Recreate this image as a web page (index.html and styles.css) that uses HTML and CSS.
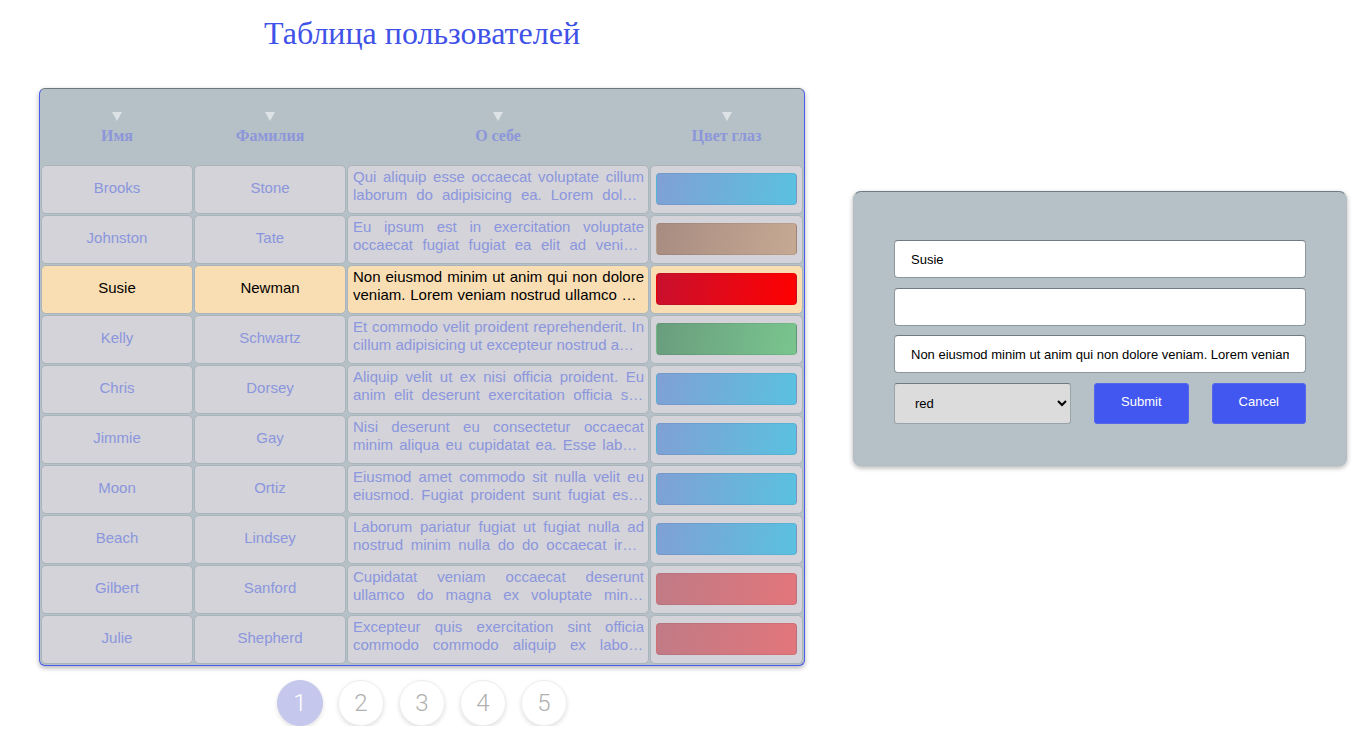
FILE: index.html
```html
<!DOCTYPE html>
<html lang="ru">
<head>
<meta charset="utf-8">
<title>Таблица пользователей</title>
<link rel="stylesheet" href="styles.css">
</head>
<body>
<div class="page">
  <section class="users">
    <h1 class="title">Таблица пользователей</h1>
    <div class="table">
      <div class="row head">
        <div class="th"><span class="arrow"></span>Имя</div>
        <div class="th"><span class="arrow"></span>Фамилия</div>
        <div class="th"><span class="arrow"></span>О себе</div>
        <div class="th"><span class="arrow"></span>Цвет глаз</div>
      </div>
      <div class="row">
        <div class="cell name">Brooks</div>
        <div class="cell name">Stone</div>
        <div class="cell about"><p>Qui aliquip esse occaecat voluptate cillum laborum do adipisicing ea. Lorem dolore ullamco sunt consequat irure aute.</p></div>
        <div class="cell eye"><span class="swatch blue"></span></div>
      </div>
      <div class="row">
        <div class="cell name">Johnston</div>
        <div class="cell name">Tate</div>
        <div class="cell about"><p>Eu ipsum est in exercitation voluptate occaecat fugiat fugiat ea elit ad veniam nulla esse proident anim.</p></div>
        <div class="cell eye"><span class="swatch brown"></span></div>
      </div>
      <div class="row active">
        <div class="cell name">Susie</div>
        <div class="cell name">Newman</div>
        <div class="cell about"><p>Non eiusmod minim ut anim qui non dolore veniam. Lorem veniam nostrud ullamco nisi sunt ad labore.</p></div>
        <div class="cell eye"><span class="swatch red"></span></div>
      </div>
      <div class="row">
        <div class="cell name">Kelly</div>
        <div class="cell name">Schwartz</div>
        <div class="cell about"><p>Et commodo velit proident reprehenderit. In cillum adipisicing ut excepteur nostrud amet tempor.</p></div>
        <div class="cell eye"><span class="swatch green"></span></div>
      </div>
      <div class="row">
        <div class="cell name">Chris</div>
        <div class="cell name">Dorsey</div>
        <div class="cell about"><p>Aliquip velit ut ex nisi officia proident. Eu anim elit deserunt exercitation officia sint pariatur dolor magna.</p></div>
        <div class="cell eye"><span class="swatch blue"></span></div>
      </div>
      <div class="row">
        <div class="cell name">Jimmie</div>
        <div class="cell name">Gay</div>
        <div class="cell about"><p>Nisi deserunt eu consectetur occaecat minim aliqua eu cupidatat ea. Esse labore dolor elit.</p></div>
        <div class="cell eye"><span class="swatch blue"></span></div>
      </div>
      <div class="row">
        <div class="cell name">Moon</div>
        <div class="cell name">Ortiz</div>
        <div class="cell about"><p>Eiusmod amet commodo sit nulla velit eu eiusmod. Fugiat proident sunt fugiat esse culpa.</p></div>
        <div class="cell eye"><span class="swatch blue"></span></div>
      </div>
      <div class="row">
        <div class="cell name">Beach</div>
        <div class="cell name">Lindsey</div>
        <div class="cell about"><p>Laborum pariatur fugiat ut fugiat nulla ad nostrud minim nulla do do occaecat irure aliquip veniam consequat.</p></div>
        <div class="cell eye"><span class="swatch blue"></span></div>
      </div>
      <div class="row">
        <div class="cell name">Gilbert</div>
        <div class="cell name">Sanford</div>
        <div class="cell about"><p>Cupidatat veniam occaecat deserunt ullamco do magna ex voluptate minim cillum laboris elit mollit esse.</p></div>
        <div class="cell eye"><span class="swatch pink"></span></div>
      </div>
      <div class="row">
        <div class="cell name">Julie</div>
        <div class="cell name">Shepherd</div>
        <div class="cell about"><p>Excepteur quis exercitation sint officia commodo commodo aliquip ex laboris nostrud tempor dolore aute.</p></div>
        <div class="cell eye"><span class="swatch pink"></span></div>
      </div>
    </div>
    <nav class="pager">
      <span class="page-btn current">1</span>
      <span class="page-btn">2</span>
      <span class="page-btn">3</span>
      <span class="page-btn">4</span>
      <span class="page-btn">5</span>
    </nav>
  </section>
  <form class="editor">
    <input class="field" type="text" value="Susie">
    <input class="field" type="text" value="">
    <input class="field" type="text" value="Non eiusmod minim ut anim qui non dolore veniam. Lorem veniam nostrud ullamco nisi sunt ad labore.">
    <div class="actions">
      <select class="color-select">
        <option>red</option>
        <option>blue</option>
        <option>green</option>
        <option>brown</option>
      </select>
      <button type="button" class="btn">Submit</button>
      <button type="button" class="btn">Cancel</button>
    </div>
  </form>
</div>
</body>
</html>
```
FILE: styles.css
```css
* { box-sizing: border-box; }

body {
  margin: 0;
  background: #ffffff;
  font-family: "Liberation Sans", Arial, sans-serif;
}

.page {
  display: flex;
  align-items: flex-start;
  padding-left: 39px;
}

.users {
  width: 766px;
  display: flex;
  flex-direction: column;
  align-items: center;
}

.title {
  margin: 14px 0 35px;
  font-family: "Liberation Serif", "Times New Roman", serif;
  font-weight: normal;
  font-size: 32px;
  line-height: 39px;
  color: #3f52e8;
  text-align: center;
}

.table {
  width: 766px;
  display: flex;
  flex-direction: column;
  gap: 1px;
  padding: 1px;
  background: #b6c1c7;
  border: 1px solid #4a5cf0;
  border-top-color: #6c7880;
  border-radius: 6px;
  box-shadow: 0 2px 5px rgba(0, 0, 0, 0.3);
}

.row {
  display: grid;
  grid-template-columns: 152px 152px 302px 153px;
  gap: 1px;
}

.head { height: 74px; }

.th {
  display: flex;
  flex-direction: column;
  align-items: center;
  justify-content: center;
  gap: 6px;
  padding-top: 2px;
  font-family: "Liberation Serif", "Times New Roman", serif;
  font-weight: bold;
  font-size: 16px;
  color: #8c96d9;
}

.arrow {
  width: 0;
  height: 0;
  border-left: 5px solid transparent;
  border-right: 5px solid transparent;
  border-top: 9px solid #dde2e7;
}

.cell {
  height: 49px;
  background: #d3d3d9;
  border: 1px solid #aab5bb;
  border-radius: 5px;
  color: #8b96dd;
  font-size: 15px;
}

.name {
  display: flex;
  align-items: center;
  justify-content: center;
  padding-bottom: 5px;
}

.about {
  padding: 2px 4px 0 5px;
}

.about p {
  margin: 0;
  line-height: 18px;
  text-align: justify;
  display: -webkit-box;
  -webkit-box-orient: vertical;
  -webkit-line-clamp: 2;
  overflow: hidden;
}

.eye {
  display: flex;
  align-items: center;
  padding: 0 5px 1px;
}

.swatch {
  display: block;
  width: 100%;
  height: 32px;
  border-radius: 4px;
  border: 1px solid rgba(0, 0, 0, 0.06);
}

.swatch.blue { background: linear-gradient(100deg, #80a0d4, #5ac1e0); }
.swatch.brown { background: linear-gradient(100deg, #a88c81, #c6a993); }
.swatch.red { background: linear-gradient(100deg, #c8102e, #ff0000); }
.swatch.green { background: linear-gradient(100deg, #6a9d7e, #79c58e); }
.swatch.pink { background: linear-gradient(100deg, #c07b86, #e2767b); }

.row.active .cell {
  background: #fadeb3;
  color: #000000;
}

.pager {
  display: flex;
  gap: 15px;
  margin-top: 14px;
}

.page-btn {
  width: 46px;
  height: 46px;
  border-radius: 50%;
  display: flex;
  align-items: center;
  justify-content: center;
  font-family: Roboto, "Noto Sans", sans-serif;
  font-size: 24px;
  font-weight: 300;
  color: #b0b0b0;
  background: #ffffff;
  border: 1px solid #eeeeee;
  box-shadow: 0 2px 4px rgba(0, 0, 0, 0.12);
}

.page-btn.current {
  background: #c5c8ec;
  border-color: #c5c8ec;
  color: #ffffff;
}

.editor {
  margin: 191px 0 0 48px;
  width: 494px;
  display: flex;
  flex-direction: column;
  gap: 9.5px;
  padding: 48px 40px 41px;
  background: #b6c1c7;
  border: 1px solid #b2bcc2;
  border-top-color: #6f7b83;
  border-radius: 8px;
  box-shadow: 0 2px 5px rgba(0, 0, 0, 0.3);
}

.field {
  height: 38px;
  width: 100%;
  margin: 0;
  padding: 0 16px;
  background: #ffffff;
  border: 1px solid #8c979e;
  border-top-color: #6f7a82;
  border-radius: 4px;
  font-family: "Liberation Sans", Arial, sans-serif;
  font-size: 13px;
  color: #000000;
}

.actions {
  display: flex;
  gap: 23px;
  height: 41px;
}

.color-select {
  width: 178px;
  height: 41px;
  margin: 0;
  padding: 0 16px;
  background: #dcdcdc;
  border: 1px solid #9aa3a8;
  border-top-color: #6f7a82;
  border-radius: 3px;
  font-family: "Liberation Sans", Arial, sans-serif;
  font-size: 13px;
  color: #000000;
}

.btn {
  width: 95px;
  height: 41px;
  margin: 0;
  background: #4257f0;
  border: 1px solid #5566e8;
  border-radius: 3px;
  color: #ffffff;
  font-family: "Liberation Sans", Arial, sans-serif;
  font-size: 13px;
  padding-bottom: 4px;
}
```
